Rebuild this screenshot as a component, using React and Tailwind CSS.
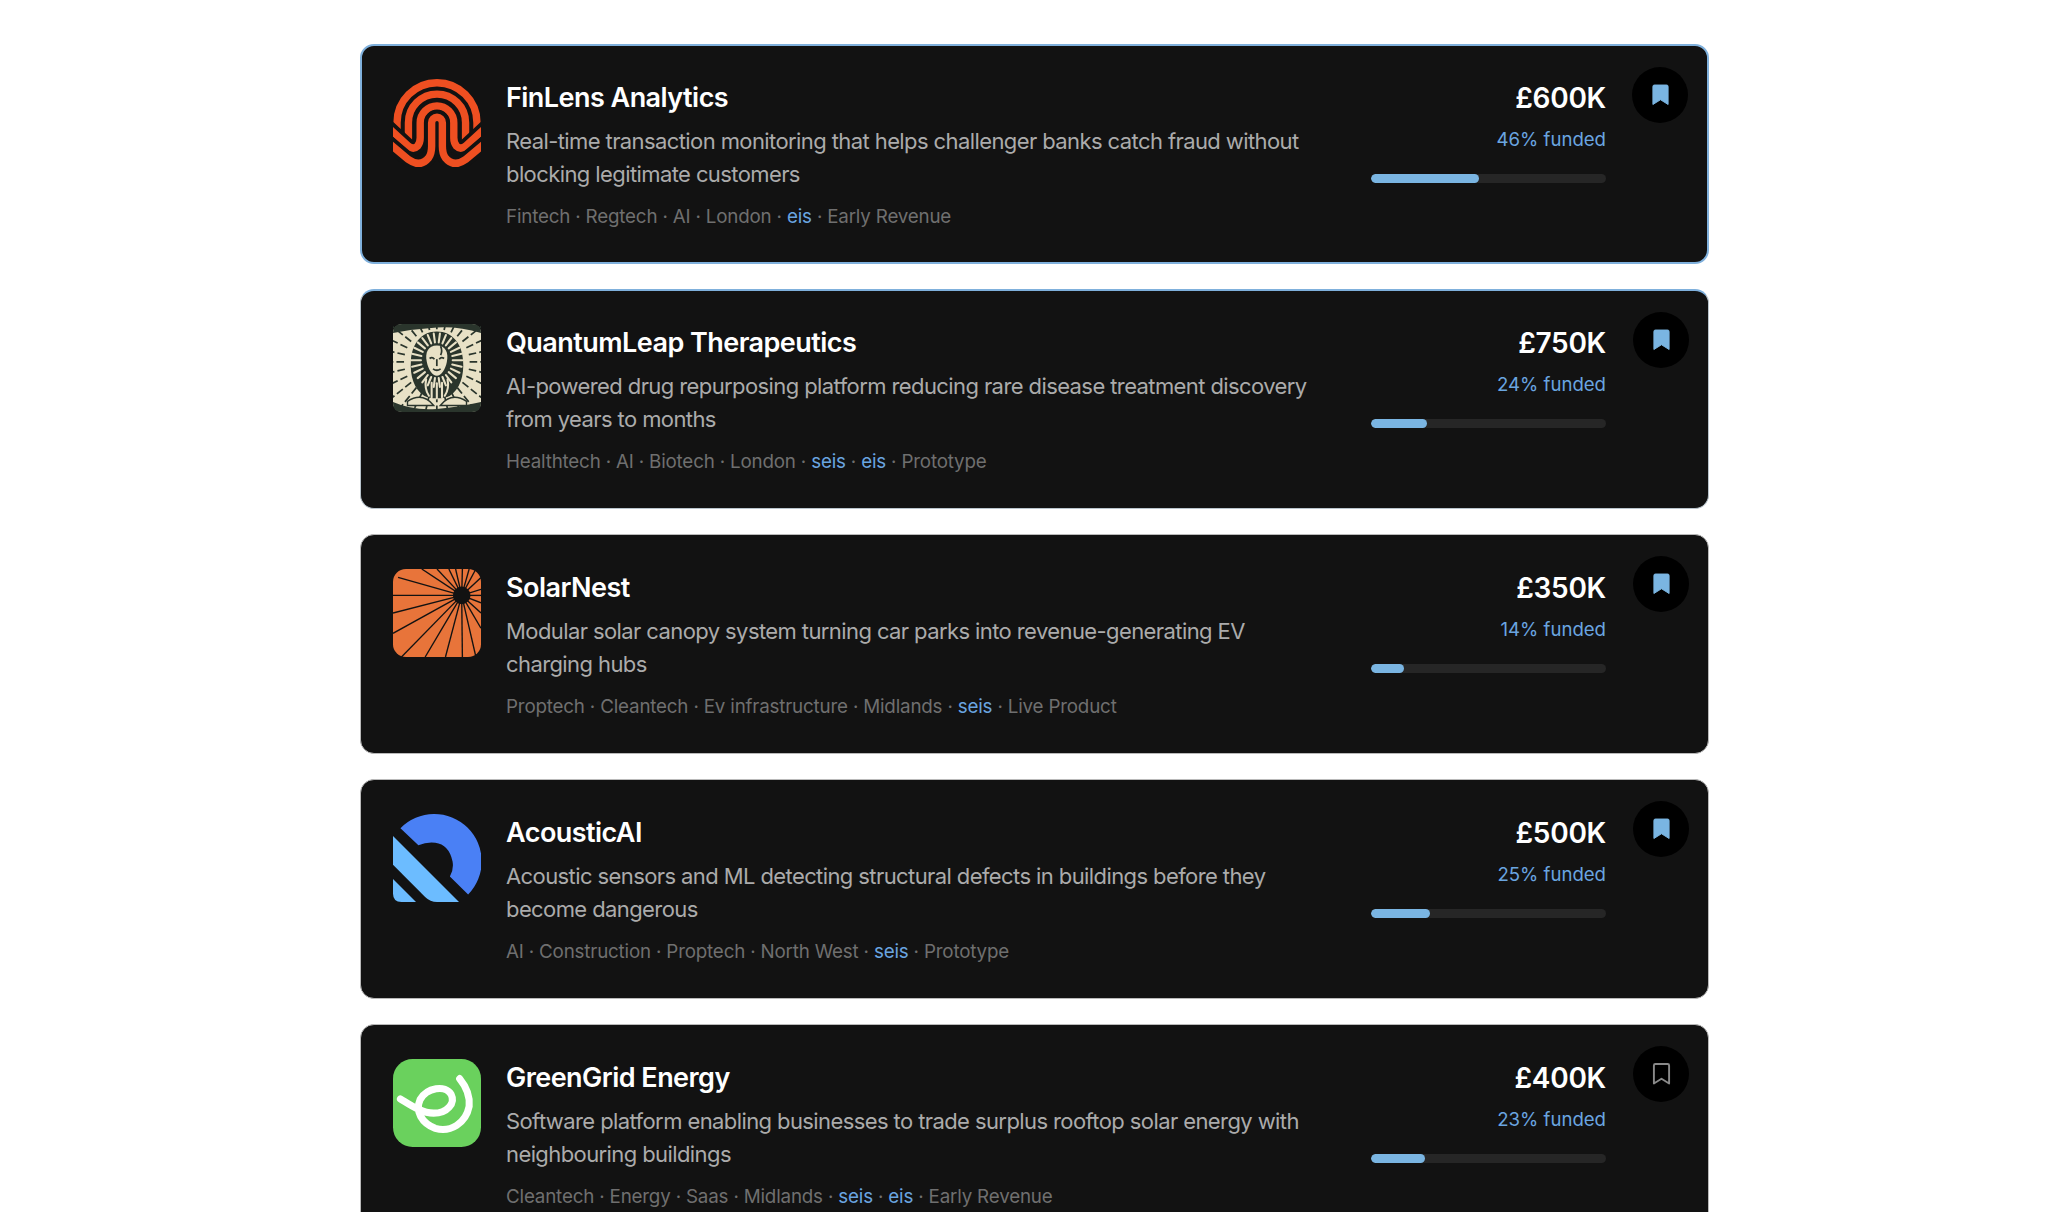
import React from 'react';

const FingerprintLogo = () => (
  <svg viewBox="0 0 260 262" className="w-[88px] h-[88px]" fill="none">
    <g stroke="#ee4f21" strokeWidth="22">
      <path d="M11 150V130A119 119 0 0 1 249 130V150" />
      <path d="M45 190V130A85 85 0 0 1 215 130V190" />
    </g>
    <path d="M-20 140L45 200Q60 212 72 200Q80 190 80 175V130A50 50 0 0 1 180 130V175Q180 190 188 200Q200 212 215 200L280 140" stroke="#121212" strokeWidth="44" />
    <path d="M-20 140L45 200Q60 212 72 200Q80 190 80 175V130A50 50 0 0 1 180 130V175Q180 190 188 200Q200 212 215 200L280 140" stroke="#ee4f21" strokeWidth="22" />
    <path d="M-20 185L45 240Q80 265 105 235Q114 222 114 200V130A16 16 0 0 1 146 130V200Q146 222 155 235Q180 265 215 240L280 185" stroke="#121212" strokeWidth="44" />
    <path d="M-20 185L45 240Q80 265 105 235Q114 222 114 200V130A16 16 0 0 1 146 130V200Q146 222 155 235Q180 265 215 240L280 185" stroke="#ee4f21" strokeWidth="22" />
  </svg>
);

const LionLogo = () => {
  const rays = Array.from({ length: 28 }, (_, i) => (i / 28) * Math.PI * 2);
  const maneTufts = Array.from({ length: 26 }, (_, i) => {
    const a = (i / 26) * Math.PI * 2;
    return { a, x1: 127 + Math.cos(a) * 46, y1: 105 + Math.sin(a) * 52, x2: 127 + Math.cos(a) * 74, y2: 105 + Math.sin(a) * 78 };
  });
  return (
    <svg viewBox="0 0 255 255" className="w-[88px] h-[88px]">
      <rect width="255" height="255" rx="26" fill="#e8e1c6" />
      <g stroke="#2a352c" strokeWidth="5" strokeDasharray="22 9">
        {rays.map((a, i) => (
          <line key={i} x1={127 + Math.cos(a) * 95} y1={110 + Math.sin(a) * 95} x2={127 + Math.cos(a) * 190} y2={110 + Math.sin(a) * 190} />
        ))}
      </g>
      <path d="M0 26Q0 0 26 0H229Q255 0 255 26Q190 6 127 10T0 26Z" fill="#2a352c" />
      <path d="M0 226Q60 252 127 246T255 226V229Q255 255 229 255H26Q0 255 0 229Z" fill="#2a352c" />
      <path d="M127 22C80 22 55 60 52 105C48 150 62 190 90 208C110 218 145 218 165 208C193 190 207 150 203 105C200 60 174 22 127 22Z" fill="#2a352c" />
      <g stroke="#e8e1c6" strokeWidth="6" strokeLinecap="round">
        {maneTufts.map((t, i) => <line key={i} x1={t.x1} y1={t.y1} x2={t.x2} y2={t.y2} />)}
      </g>
      <g stroke="#e8e1c6" strokeWidth="6" fill="none" strokeLinecap="round">
        <path d="M96 160C92 180 96 196 104 208" />
        <path d="M112 170V212" />
        <path d="M127 172V216" />
        <path d="M142 170V212" />
        <path d="M158 160C162 180 158 196 150 208" />
      </g>
      <path d="M127 62C102 62 92 82 98 110C102 132 115 150 127 150C139 150 152 132 156 110C162 82 152 62 127 62Z" fill="#e8e1c6" />
      <g stroke="#2a352c" strokeWidth="5" fill="none">
        <path d="M106 100Q114 94 120 102" />
        <path d="M134 102Q140 94 148 100" />
        <path d="M127 102V122" />
        <path d="M116 130Q127 138 138 130" />
        <path d="M138 64Q144 78 138 90" />
      </g>
      <path d="M42 224Q85 196 118 236H42Z" fill="#e8e1c6" stroke="#2a352c" strokeWidth="4" />
      <path d="M213 224Q170 196 137 236H213Z" fill="#e8e1c6" stroke="#2a352c" strokeWidth="4" />
    </svg>
  );
};

const SunLogo = () => {
  const rays = [[205, 260], [155, 260], [95, 260], [25, 260], [0, 190], [0, 130], [0, 78], [15, 25], [85, 0], [130, 0], [165, 0], [185, 0], [205, 0], [225, 0], [245, 0], [260, 25], [260, 60], [260, 78], [260, 100], [260, 130], [260, 175], [245, 260]];
  return (
    <svg viewBox="0 0 260 260" className="w-[88px] h-[88px]">
      <rect width="260" height="260" rx="38" fill="#e8743a" />
      <g stroke="#121212" strokeWidth="4">
        {rays.map(([x, y], i) => <line key={i} x1="203" y1="78" x2={x} y2={y} />)}
      </g>
      <circle cx="203" cy="78" r="26" fill="#121212" />
    </svg>
  );
};

const AcousticLogo = () => (
  <svg viewBox="0 0 260 260" className="w-[88px] h-[88px]">
    <path d="M22 42A130 130 0 0 1 222 238L168 185Q180 165 176 140Q165 90 125 85Q100 82 75 92Z" fill="#4a80f5" />
    <path d="M0 65L195 260H130Q110 260 95 245L0 150Z" fill="#6cbcff" />
    <path d="M0 192L68 260H25Q0 260 0 235Z" fill="#6cbcff" />
  </svg>
);

const GreenLogo = () => (
  <svg viewBox="0 0 260 260" className="w-[88px] h-[88px]">
    <rect width="260" height="260" rx="58" fill="#6ad15d" />
    <path d="M22 118C50 135 85 160 120 160C160 160 185 130 172 105C155 75 100 85 80 120C65 155 85 190 125 205C170 218 215 190 225 140C228 110 215 80 197 58" fill="none" stroke="#ffffff" strokeWidth="21" strokeLinecap="round" />
  </svg>
);

const BookmarkIcon = ({ saved }) => (
  <svg viewBox="0 0 20 24" className="w-[19px] h-[24px]" fill={saved ? '#7ab5e2' : 'none'} stroke={saved ? '#7ab5e2' : '#8a8a8a'} strokeWidth={saved ? 1 : 2} strokeLinejoin="round">
    <path d="M2 3Q2 1.500 3.500 1.500H16.500Q18 1.500 18 3V22L10 17L2 22Z" />
  </svg>
);

const startups = [
  {
    name: 'FinLens Analytics', logo: <FingerprintLogo />, amount: '£600K', funded: 46, saved: true,
    border: 'border-2 border-[#7fb0dc] pt-[31px] pl-[31px] pr-[101px]',
    desc: 'Real-time transaction monitoring that helps challenger banks catch fraud without blocking legitimate customers',
    tags: ['Fintech', 'Regtech', 'AI', 'London', '*eis', 'Early Revenue'],
  },
  {
    name: 'QuantumLeap Therapeutics', logo: <LionLogo />, amount: '£750K', funded: 24, saved: true,
    border: 'border border-[#b9c4cc] border-t-2 border-t-[#7fb0dc] pt-[31px] pl-[32px] pr-[102px]',
    desc: 'AI-powered drug repurposing platform reducing rare disease treatment discovery from years to months',
    tags: ['Healthtech', 'AI', 'Biotech', 'London', '*seis', '*eis', 'Prototype'],
  },
  {
    name: 'SolarNest', logo: <SunLogo />, amount: '£350K', funded: 14, saved: true,
    border: 'border border-[#b9b9b9] pt-[32px] pl-[32px] pr-[102px]',
    desc: 'Modular solar canopy system turning car parks into revenue-generating EV charging hubs',
    tags: ['Proptech', 'Cleantech', 'Ev infrastructure', 'Midlands', '*seis', 'Live Product'],
  },
  {
    name: 'AcousticAI', logo: <AcousticLogo />, amount: '£500K', funded: 25, saved: true,
    border: 'border border-[#b9b9b9] pt-[32px] pl-[32px] pr-[102px]',
    desc: 'Acoustic sensors and ML detecting structural defects in buildings before they become dangerous',
    tags: ['AI', 'Construction', 'Proptech', 'North West', '*seis', 'Prototype'],
  },
  {
    name: 'GreenGrid Energy', logo: <GreenLogo />, amount: '£400K', funded: 23, saved: false,
    border: 'border border-[#b9b9b9] pt-[32px] pl-[32px] pr-[102px]',
    desc: 'Software platform enabling businesses to trade surplus rooftop solar energy with neighbouring buildings',
    tags: ['Cleantech', 'Energy', 'Saas', 'Midlands', '*seis', '*eis', 'Early Revenue'],
  },
];

const StartupCard = ({ startup }) => (
  <div className={`relative flex h-[220px] items-start gap-[25px] rounded-[14px] bg-[#121212] ${startup.border}`}>
    <div className="mt-[2px] shrink-0">{startup.logo}</div>
    <div className="w-[808px] shrink-0 pt-[2px]">
      <h3 className="text-[27px] leading-[38px] font-semibold tracking-[-0.02em] text-white">{startup.name}</h3>
      <p className="mt-[8px] text-[22px] leading-[33.300px] tracking-[-0.027em] text-[#ababab]">{startup.desc}</p>
      <p className="mt-[11px] text-[18.800px] leading-[28px] tracking-[-0.01em] text-[#6f6f6f]">
        {startup.tags.map((tag, i) => (
          <span key={i}>
            {i > 0 && ' · '}
            {tag.startsWith('*') ? <span className="text-[#6aa5e0]">{tag.slice(1)}</span> : tag}
          </span>
        ))}
      </p>
    </div>
    <div className="ml-auto flex w-[235px] shrink-0 flex-col items-end pt-[2px]">
      <div className="text-[28px] leading-[38px] font-semibold tracking-[-0.01em] text-white">{startup.amount}</div>
      <div className="mt-[8px] text-[18.600px] leading-[28px] text-[#6aa5e0]">{startup.funded}% funded</div>
      <div className="mt-[21px] h-[9px] w-full overflow-hidden rounded-full bg-[#262626]">
        <div className="h-full rounded-full bg-[#7ab5e2]" style={{ width: `${startup.funded}%` }} />
      </div>
    </div>
    <button className="absolute top-[21px] right-[19px] flex h-[56px] w-[56px] items-center justify-center rounded-full bg-black">
      <BookmarkIcon saved={startup.saved} />
    </button>
  </div>
);

const App = () => (
  <div className="h-screen overflow-hidden bg-white pt-[44px] font-['Inter',sans-serif]">
    <div className="ml-[360px] flex w-[1349px] flex-col gap-[25px]">
      {startups.map((s) => <StartupCard key={s.name} startup={s} />)}
    </div>
  </div>
);

export default App;
